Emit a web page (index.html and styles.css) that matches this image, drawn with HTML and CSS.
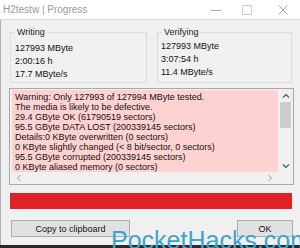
FILE: index.html
```html
<!DOCTYPE html>
<html>
<head>
<meta charset="utf-8">
<link rel="stylesheet" href="styles.css">
</head>
<body>
<div class="window">
  <div class="titlebar">
    <span class="title">H2testw | Progress</span>
    <div class="controls">
      <svg class="min" width="10" height="10" viewBox="0 0 10 10"><path d="M0 5.5h10" stroke="#aaa" stroke-width="1"/></svg>
      <svg class="max" width="10" height="10" viewBox="0 0 10 10"><rect x="0.5" y="0.5" width="9" height="9" fill="none" stroke="#ccc" stroke-width="1"/></svg>
      <svg class="close" width="10" height="10" viewBox="0 0 10 10"><path d="M0.5 0.5l9 9M9.5 0.5l-9 9" stroke="#aaa" stroke-width="1"/></svg>
    </div>
  </div>
  <div class="body">
    <div class="groups">
      <div class="group">
        <span class="legend">Writing</span>
        <div class="line">127993 MByte</div>
        <div class="line">2:00:16 h</div>
        <div class="line">17.7 MByte/s</div>
      </div>
      <div class="group verify">
        <span class="legend">Verifying</span>
        <div class="line">127993 MByte</div>
        <div class="line">3:07:54 h</div>
        <div class="line">11.4 MByte/s</div>
      </div>
    </div>
    <div class="log">
      <div class="log-main">
        <div class="log-text">
          <div>Warning: Only 127993 of 127994 MByte tested.</div>
          <div>The media is likely to be defective.</div>
          <div>29.4 GByte OK (61790519 sectors)</div>
          <div>95.5 GByte DATA LOST (200339145 sectors)</div>
          <div>Details:0 KByte overwritten (0 sectors)</div>
          <div>0 KByte slightly changed (&lt; 8 bit/sector, 0 sectors)</div>
          <div>95.5 GByte corrupted (200339145 sectors)</div>
          <div>0 KByte aliased memory (0 sectors)</div>
        </div>
        <div class="vscroll">
          <svg width="8" height="6" viewBox="0 0 8 6"><path d="M1 4.5l3-3 3 3" fill="none" stroke="#555" stroke-width="1.2"/></svg>
          <div class="thumb"></div>
          <div class="spacer"></div>
          <svg width="8" height="6" viewBox="0 0 8 6"><path d="M1 1.5l3 3 3-3" fill="none" stroke="#555" stroke-width="1.2"/></svg>
        </div>
      </div>
      <div class="hscroll">
        <svg width="6" height="8" viewBox="0 0 6 8"><path d="M4.5 1l-3 3 3 3" fill="none" stroke="#bbb" stroke-width="1.2"/></svg>
        <svg width="6" height="8" viewBox="0 0 6 8"><path d="M1.5 1l3 3-3 3" fill="none" stroke="#bbb" stroke-width="1.2"/></svg>
      </div>
    </div>
    <div class="progress"></div>
    <div class="buttons">
      <div class="btn copy">Copy to clipboard</div>
      <div class="btn ok">OK</div>
    </div>
  </div>
  <div class="bottom-strip"></div>
  <div class="watermark">PocketHacks.com</div>
</div>
</body>
</html>
```
FILE: styles.css
```css
* { box-sizing: border-box; }
html, body { margin: 0; padding: 0; }
body {
  width: 300px;
  height: 248px;
  overflow: hidden;
  font-family: "Liberation Sans", Arial, sans-serif;
  background: #f0f0f0;
}
.window {
  position: relative;
  width: 300px;
  height: 248px;
  display: flex;
  flex-direction: column;
  overflow: hidden;
}
.titlebar {
  height: 20px;
  flex: none;
  background: #fff;
  display: flex;
  align-items: center;
  justify-content: space-between;
  padding: 0 12px 0 3px;
  border-bottom: 1px solid #d8d8d8;
}
.title {
  font-size: 10px;
  color: #9a9a9a;
}
.controls {
  display: flex;
  align-items: center;
}
.controls .max { margin-left: 21px; }
.controls .close { margin-left: 26px; }
.body {
  flex: 1;
  background: #f0f0f0;
  border-left: 1px solid #b0b0b0;
  padding: 6px 7px 0 9px;
  display: flex;
  flex-direction: column;
}
.groups {
  display: flex;
  gap: 10px;
  height: 57px;
  align-items: flex-end;
}
.group {
  position: relative;
  width: 137px;
  height: 51px;
  border: 1px solid #dcdcdc;
  padding: 9px 0 0 4px;
  font-size: 9px;
  color: #111;
}
.group.verify {
  width: 135px;
  padding-top: 7px;
  padding-left: 3px;
}
.legend {
  position: absolute;
  top: -6px;
  left: 4px;
  padding: 0 2px;
  background: #f0f0f0;
  font-size: 9px;
  color: #222;
}
.line {
  height: 13px;
  line-height: 13px;
}
.log {
  margin-top: 5px;
  height: 97px;
  border: 1px solid #a8a8a8;
  background: #f0f0f0;
  display: flex;
  flex-direction: column;
  margin-left: -1px;
  margin-right: -1px;
}
.log-main {
  flex: 1;
  display: flex;
}
.log-text {
  flex: 1;
  background: #ffd2d2;
  padding: 2px 0 0 3px;
  margin: 1px 0 0 2px;
  font-size: 9px;
  line-height: 10px;
  color: #111;
  white-space: nowrap;
  overflow: hidden;
}
.vscroll {
  width: 15px;
  display: flex;
  flex-direction: column;
  align-items: center;
  padding-top: 4px;
  padding-bottom: 3px;
  background: #f0f0f0;
}
.thumb {
  width: 11px;
  height: 26px;
  margin-top: 3px;
  background: #cdcdcd;
}
.spacer { flex: 1; }
.hscroll {
  height: 14px;
  display: flex;
  justify-content: space-between;
  align-items: center;
  padding: 0 20px 0 6px;
}
.progress {
  margin-top: 8px;
  height: 16px;
  background: #df2325;
  margin-right: 1px;
}
.buttons {
  margin-top: 11px;
  display: flex;
  justify-content: space-between;
}
.btn {
  height: 17px;
  border: 1px solid #adadad;
  background: #e1e1e1;
  font-size: 9px;
  color: #111;
  display: flex;
  align-items: center;
  justify-content: center;
}
.copy { width: 119px; margin-left: 1px; }
.ok { width: 56px; }
.bottom-strip {
  position: absolute;
  left: 0;
  right: 0;
  bottom: 0;
  height: 3px;
  background: #2a2a2a;
}
.watermark {
  position: absolute;
  left: 111px;
  top: 228px;
  font-family: "Liberation Sans", Arial, sans-serif;
  font-size: 25px;
  line-height: 25px;
  color: #3ea4cc;
  white-space: nowrap;
}
```
